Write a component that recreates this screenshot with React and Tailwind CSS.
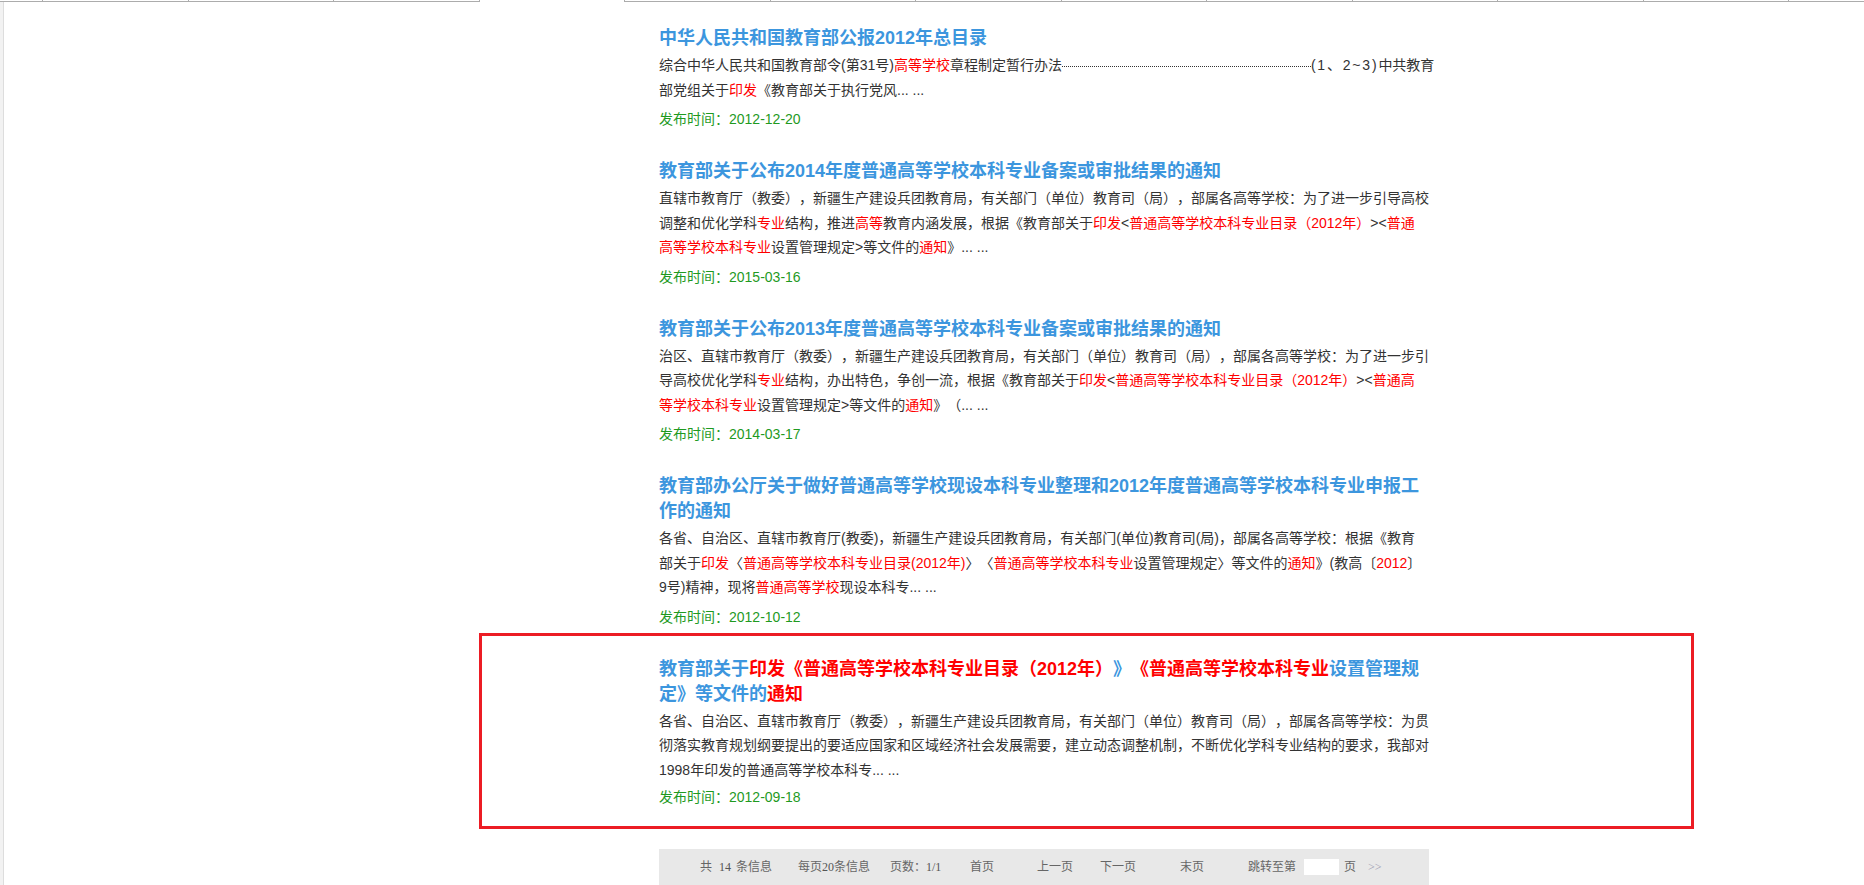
import React from "react";

const R = ({ children }) => <span className="text-[#ff0000]">{children}</span>;

const items = [
  {
    title: [<span key="a">中华人民共和国教育部公报2012年总目录</span>],
    lines: [
      <>
        综合中华人民共和国教育部令(第31号)<R>高等学校</R>章程制定暂行办法
        <span className="inline-block w-[249px] h-[1px] align-middle border-b border-dotted border-[#333]"></span>
        <span className="tracking-[1.8px]">(1、2~3)</span>中共教育
      </>,
      <>
        部党组关于<R>印发</R>《教育部关于执行党风... ...
      </>,
    ],
    date: "2012-12-20",
  },
  {
    title: [<span key="a">教育部关于公布2014年度普通高等学校本科专业备案或审批结果的通知</span>],
    lines: [
      <>直辖市教育厅（教委），新疆生产建设兵团教育局，有关部门（单位）教育司（局），部属各高等学校：为了进一步引导高校</>,
      <>
        调整和优化学科<R>专业</R>结构，推进<R>高等</R>教育内涵发展，根据《教育部关于<R>印发</R>&lt;<R>普通高等学校本科专业目录（2012年）</R>&gt;&lt;<R>普通</R>
      </>,
      <>
        <R>高等学校本科专业</R>设置管理规定&gt;等文件的<R>通知</R>》... ...
      </>,
    ],
    date: "2015-03-16",
  },
  {
    title: [<span key="a">教育部关于公布2013年度普通高等学校本科专业备案或审批结果的通知</span>],
    lines: [
      <>治区、直辖市教育厅（教委），新疆生产建设兵团教育局，有关部门（单位）教育司（局），部属各高等学校：为了进一步引</>,
      <>
        导高校优化学科<R>专业</R>结构，办出特色，争创一流，根据《教育部关于<R>印发</R>&lt;<R>普通高等学校本科专业目录（2012年）</R>&gt;&lt;<R>普通高</R>
      </>,
      <>
        <R>等学校本科专业</R>设置管理规定&gt;等文件的<R>通知</R>》（... ...
      </>,
    ],
    date: "2014-03-17",
  },
  {
    title: [
      <span key="a">教育部办公厅关于做好普通高等学校现设本科专业整理和2012年度普通高等学校本科专业申报工</span>,
      <span key="b">作的通知</span>,
    ],
    lines: [
      <>各省、自治区、直辖市教育厅(教委)，新疆生产建设兵团教育局，有关部门(单位)教育司(局)，部属各高等学校：根据《教育</>,
      <>
        部关于<R>印发</R>〈<R>普通高等学校本科专业目录(2012年)</R>〉〈<R>普通高等学校本科专业</R>设置管理规定〉等文件的<R>通知</R>》(教高〔<R>2012</R>〕
      </>,
      <>
        9号)精神，现将<R>普通高等学校</R>现设本科专... ...
      </>,
    ],
    date: "2012-10-12",
  },
  {
    title: [
      <span key="a">
        教育部关于<R>印发《普通高等学校本科专业目录（2012年）</R>》<R>《普通高等学校本科专业</R>设置管理规
      </span>,
      <span key="b">
        定》等文件的<R>通知</R>
      </span>,
    ],
    lines: [
      <>各省、自治区、直辖市教育厅（教委），新疆生产建设兵团教育局，有关部门（单位）教育司（局），部属各高等学校：为贯</>,
      <>彻落实教育规划纲要提出的要适应国家和区域经济社会发展需要，建立动态调整机制，不断优化学科专业结构的要求，我部对</>,
      <>1998年印发的普通高等学校本科专... ...</>,
    ],
    date: "2012-09-18",
  },
];

function TopRow() {
  const cells = [];
  cells.push(
    <div key="first" className="shrink-0 w-[43px] h-[2px] border-r border-b border-[#acacac]" />
  );
  for (let i = 0; i < 13; i++) {
    const gap = i === 3;
    cells.push(
      <div
        key={i}
        className={
          gap
            ? "shrink-0 w-[145.5px] h-[2px] border-r border-[#acacac]"
            : "shrink-0 w-[145.5px] h-[2px] border-r border-b border-[#acacac]"
        }
      />
    );
  }
  return <div className="flex w-full h-[2px] overflow-hidden">{cells}</div>;
}

function Item({ item, first, last }) {
  return (
    <div className={first ? "" : "pt-[30px]"}>
      <div className="text-[18px] leading-[25px] font-bold text-[#3c96de] whitespace-nowrap">
        {item.title.map((t, i) => (
          <div key={i}>{t}</div>
        ))}
      </div>
      <div className="mt-[2px] text-[14px] leading-[24.5px] text-[#333333] whitespace-nowrap">
        {item.lines.map((l, i) => (
          <div key={i}>{l}</div>
        ))}
      </div>
      <div className={(last ? "mt-[5px]" : "mt-[7px]") + " text-[14px] leading-[20px] text-[#1f9a1f]"}>
        发布时间：{item.date}
      </div>
    </div>
  );
}

function Pager() {
  return (
    <div className="mt-[42px] h-[36px] w-[770px] bg-[#e8e8e8] flex items-center text-[12px] text-[#666666] font-['Liberation_Serif','Noto_Sans_CJK_SC',serif] pl-[41px]">
      <span className="shrink-0 w-[98px] flex">
        <span>共</span>
        <span className="ml-[7px] text-[#555]">14</span>
        <span className="ml-[5px]">条信息</span>
      </span>
      <span className="shrink-0 w-[92px]">
        每页<span className="text-[#555]">20</span>条信息
      </span>
      <span className="shrink-0 w-[80px]">
        页数：<span className="text-[#555]">1/1</span>
      </span>
      <span className="shrink-0 w-[67px]">首页</span>
      <span className="shrink-0 w-[63px]">上一页</span>
      <span className="shrink-0 w-[80px]">下一页</span>
      <span className="shrink-0 w-[68px]">末页</span>
      <span className="shrink-0 w-[56px]">跳转至第</span>
      <span className="shrink-0 w-[35px] h-[16px] bg-white"></span>
      <span className="shrink-0 ml-[5px] w-[24px]">页</span>
      <span className="shrink-0 text-[#9a9ab0]">&gt;&gt;</span>
    </div>
  );
}

export default function App() {
  return (
    <div className="relative w-full h-[885px] overflow-hidden bg-white [text-spacing-trim:space-all] font-['Liberation_Sans','Noto_Sans_CJK_SC',sans-serif]">
      <TopRow />
      <div className="flex">
        <div className="shrink-0 w-[4px] h-[883px] bg-[#f2f2f2] border-r border-[#dddddd]" />
        <div className="ml-[655px] w-[770px] pt-[24px]">
          {items.map((it, i) => (
            <Item key={i} item={it} first={i === 0} last={i === items.length - 1} />
          ))}
          <Pager />
        </div>
      </div>
      <div className="absolute left-[479px] top-[633px] w-[1215px] h-[196px] border-[3px] border-[#ec1c24] pointer-events-none" />
    </div>
  );
}
